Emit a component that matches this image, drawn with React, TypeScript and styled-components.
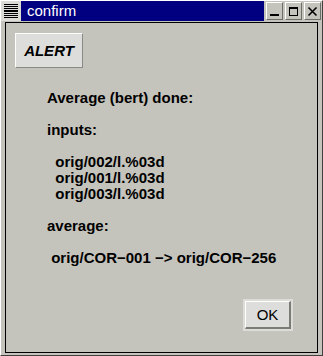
import React from 'react';
import styled, { createGlobalStyle } from 'styled-components';

const GlobalStyle = createGlobalStyle`
  html, body {
    margin: 0;
    padding: 0;
    background: #c5c4bc;
    font-family: "Liberation Sans", Arial, sans-serif;
  }
`;

const Window = styled.div`
  width: 323px;
  height: 356px;
  box-sizing: border-box;
  display: flex;
  flex-direction: column;
  background: #c5c4bc;
  border-top: 1px solid #ffffff;
  border-left: 1px solid #ffffff;
  border-right: 1px solid #404040;
  border-bottom: 1px solid #404040;
`;

const TitleRow = styled.div`
  display: flex;
  height: 20px;
  align-items: stretch;
`;

const MenuButton = styled.div`
  width: 20px;
  box-sizing: border-box;
  padding: 3px 3px;
  background: #dcdcd6;
  display: flex;
  flex-direction: column;
  justify-content: space-between;
`;

const Stripe = styled.div`
  height: 1px;
  background: #000;
`;

const TitleBar = styled.div`
  flex: 1;
  background: #000080;
  color: #ffffff;
  font-size: 15px;
  line-height: 20px;
  padding-left: 6px;
`;

const Controls = styled.div`
  display: flex;
  gap: 2px;
  padding: 1px 1px 0 2px;
`;

const CtlButton = styled.div`
  width: 17px;
  height: 18px;
  box-sizing: border-box;
  background: #c5c4bc;
  border-top: 1px solid #ffffff;
  border-left: 1px solid #ffffff;
  border-right: 1px solid #6e6e68;
  border-bottom: 1px solid #6e6e68;
  display: flex;
  align-items: center;
  justify-content: center;
`;

const Frame = styled.div`
  flex: 1;
  display: flex;
  padding: 1px 4px 2px 4px;
`;

const Content = styled.div`
  flex: 1;
  display: flex;
  flex-direction: column;
  border: 1px solid #000;
  padding: 10px 24px 21px 9px;
`;

const Button = styled.button<{ $bold?: boolean }>`
  font-family: "Liberation Sans", Arial, sans-serif;
  background: #dddddb;
  color: #000;
  border-top: 1px solid #ffffff;
  border-left: 1px solid #ffffff;
  border-right: 2px solid #7c7c76;
  border-bottom: 2px solid #7c7c76;
  padding: 0;
  font-size: 15px;
  font-weight: ${(p) => (p.$bold ? 'bold' : 'normal')};
  font-style: ${(p) => (p.$bold ? 'italic' : 'normal')};
`;

const AlertButton = styled(Button)`
  width: 68px;
  height: 35px;
  align-self: flex-start;
  border: 1px solid #ffffff;
  border-right-color: #8a8a84;
  border-bottom-color: #8a8a84;
  box-shadow: inset 0 0 0 1px #dddddb;
`;

const Message = styled.div`
  margin: 22px 0 0 32px;
  white-space: pre;
  font-size: 15px;
  font-weight: bold;
  line-height: 16px;
  color: #000;
`;

const OkRing = styled.div`
  margin-top: auto;
  align-self: flex-end;
  padding: 2px;
  background: #dcdcd8;
`;

const OkButton = styled(Button)`
  display: block;
  width: 46px;
  height: 28px;
`;

const lines = [
  'Average (bert) done:',
  '',
  'inputs:',
  '',
  '  orig/002/l.%03d',
  '  orig/001/l.%03d',
  '  orig/003/l.%03d',
  '',
  'average:',
  '',
  ' orig/COR\u2212001 \u2212> orig/COR\u2212256',
].join('\n');

const App: React.FC = () => (
  <>
    <GlobalStyle />
    <Window>
      <TitleRow>
        <MenuButton>
          {Array.from({ length: 8 }).map((_, i) => (
            <Stripe key={i} />
          ))}
        </MenuButton>
        <TitleBar>confirm</TitleBar>
        <Controls>
          <CtlButton>
            <svg width="11" height="11" viewBox="0 0 11 11">
              <rect x="1" y="8" width="9" height="2" fill="#000" />
            </svg>
          </CtlButton>
          <CtlButton>
            <svg width="11" height="11" viewBox="0 0 11 11">
              <rect x="1.5" y="1.5" width="8" height="8" fill="none" stroke="#000" />
              <rect x="1" y="1" width="9" height="2" fill="#000" />
            </svg>
          </CtlButton>
          <CtlButton>
            <svg width="11" height="11" viewBox="0 0 11 11">
              <path d="M1.5 1.5 L9.5 9.5 M9.5 1.5 L1.5 9.5" stroke="#000" strokeWidth="1.6" />
            </svg>
          </CtlButton>
        </Controls>
      </TitleRow>
      <Frame>
        <Content>
          <AlertButton $bold>ALERT</AlertButton>
          <Message>{lines}</Message>
          <OkRing>
            <OkButton>OK</OkButton>
          </OkRing>
        </Content>
      </Frame>
    </Window>
  </>
);

export default App;
